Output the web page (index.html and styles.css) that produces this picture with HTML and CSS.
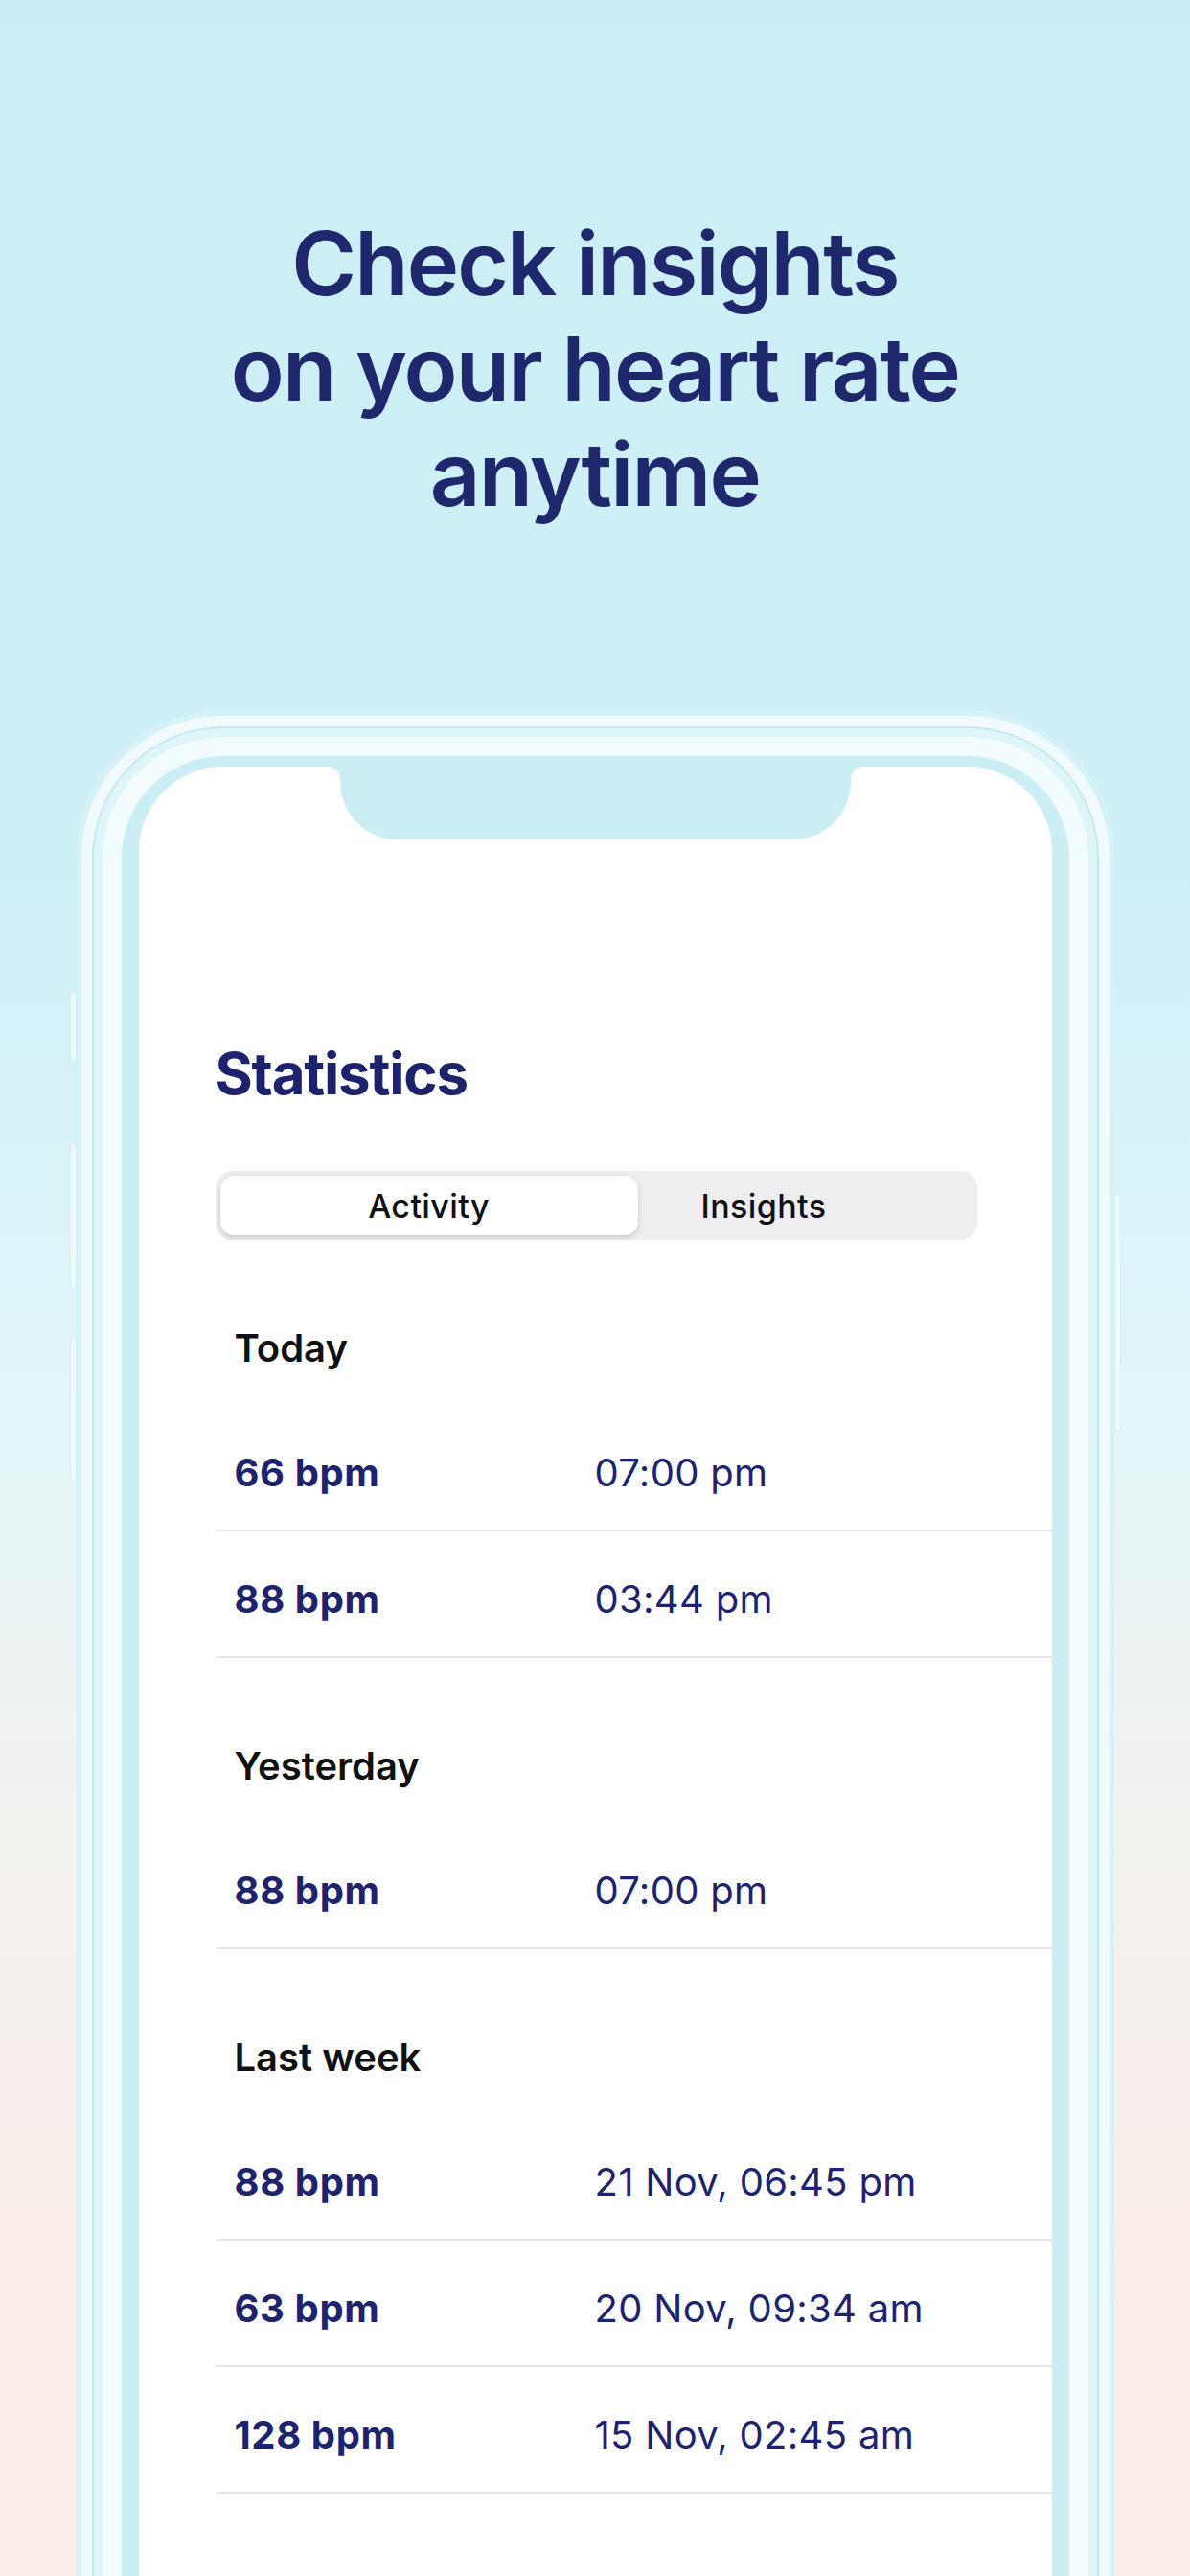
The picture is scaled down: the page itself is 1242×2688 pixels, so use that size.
FILE: index.html
```html
<!DOCTYPE html>
<html lang="en">
<head>
    <meta charset="UTF-8">
    <meta name="viewport" content="width=device-width, initial-scale=1.0">
    <title>Heart Rate Statistics</title>
    <link rel="stylesheet" href="styles.css">
</head>
<body>
    <div class="page">
        <h1 class="headline">Check insights<br>on your heart rate<br>anytime</h1>

        <div class="phone">
            <span class="side-btn left b1"></span>
            <span class="side-btn left b2"></span>
            <span class="side-btn left b3"></span>
            <span class="side-btn right b4"></span>

            <div class="screen">
                <div class="notch"></div>

                <h2 class="title">Statistics</h2>

                <div class="segmented">
                    <div class="segment active">Activity</div>
                    <div class="segment">Insights</div>
                </div>

                <div class="section">
                    <div class="section-head">Today</div>
                    <div class="row"><span class="bpm">66 bpm</span><span class="time">07:00 pm</span></div>
                    <div class="row"><span class="bpm">88 bpm</span><span class="time">03:44 pm</span></div>
                </div>

                <div class="section">
                    <div class="section-head">Yesterday</div>
                    <div class="row"><span class="bpm">88 bpm</span><span class="time">07:00 pm</span></div>
                </div>

                <div class="section">
                    <div class="section-head">Last week</div>
                    <div class="row"><span class="bpm">88 bpm</span><span class="time">21 Nov, 06:45 pm</span></div>
                    <div class="row"><span class="bpm">63 bpm</span><span class="time">20 Nov, 09:34 am</span></div>
                    <div class="row"><span class="bpm">128 bpm</span><span class="time">15 Nov, 02:45 am</span></div>
                </div>
            </div>
        </div>
    </div>
</body>
</html>
```

FILE: styles.css
```css
html, body {
    margin: 0;
    padding: 0;
}
body {
    font-family: Inter, "Noto Sans", sans-serif;
    height: 2688px;
    overflow: hidden;
    background: linear-gradient(180deg, #cbeef5 0, #cef0f6 900px, #e2f5f8 1450px, #f3f2ef 1900px, #faede9 2400px, #faede9 100%);
}
.page {
    padding-top: 220px;
}
.headline {
    margin: 0;
    text-align: center;
    font-size: 92px;
    line-height: 110px;
    font-weight: 600;
    letter-spacing: -1.8px;
    color: #1f276d;
}

/* device frame */
.phone {
    position: relative;
    width: 1083px;
    margin: 192px auto 0;
    padding: 58px 65px 0;
    box-sizing: border-box;
    border-radius: 153px 153px 0 0;
    background: #caeef4;
    box-shadow:
        inset 0 0 0 5px #d4f2f7,
        inset 0 0 0 16px #f1fbfd,
        inset 0 0 0 18px #c4eaf1,
        inset 0 0 0 27px #def5f9,
        inset 0 0 0 47px #f2fbfd;
}
.side-btn {
    position: absolute;
    width: 5px;
    border-radius: 2px;
    background: #effafc;
    box-shadow: 0 0 0 1px #d2eff5;
}
.side-btn.left { left: -6px; }
.side-btn.right { right: -6px; }
.b1 { top: 294px; height: 70px; }
.b2 { top: 452px; height: 150px; }
.b3 { top: 654px; height: 150px; }
.b4 { top: 505px; height: 245px; }

.screen {
    position: relative;
    background: #fff;
    border-radius: 88px 88px 0 0;
    padding: 284px 0 200px 80px;
    min-height: 1700px;
}
.notch {
    position: absolute;
    top: 0;
    left: 50%;
    width: 533px;
    height: 76px;
    margin-left: -266px;
    background: #caeef4;
    border-radius: 0 0 60px 60px;
}
.notch::before, .notch::after {
    content: "";
    position: absolute;
    top: 0;
    width: 12px;
    height: 12px;
}
.notch::before {
    right: 100%;
    background: radial-gradient(circle at 0 100%, transparent 11.5px, #caeef4 12px);
}
.notch::after {
    left: 100%;
    background: radial-gradient(circle at 100% 100%, transparent 11.5px, #caeef4 12px);
}

.title {
    margin: 0;
    font-size: 60px;
    line-height: 72px;
    font-weight: 700;
    letter-spacing: -1.2px;
    color: #1c236c;
}

.segmented {
    display: flex;
    width: 795px;
    height: 72px;
    margin-top: 66px;
    padding: 5px;
    box-sizing: border-box;
    background: #eeeef0;
    border-radius: 18px;
}
.segment {
    display: flex;
    align-items: center;
    justify-content: center;
    font-size: 34px;
    font-weight: 500;
    color: #111;
    letter-spacing: 0.4px;
}
.segment.active {
    width: 436px;
    background: #fff;
    border-radius: 14px;
    box-shadow: 0 3px 6px rgba(0, 0, 0, 0.13), 0 0 0 1px rgba(0, 0, 0, 0.03);
}
.segment:not(.active) {
    flex: 1;
    padding-right: 86px;
}

.section-head {
    padding: 89px 0 35px 20px;
    font-size: 40px;
    line-height: 48px;
    font-weight: 600;
    color: #111;
}
.row {
    display: flex;
    padding: 47px 0 35px 20px;
    font-size: 40px;
    line-height: 48px;
    color: #1d246d;
    letter-spacing: 0.3px;
    border-bottom: 2px solid #e6e6ea;
}
.bpm {
    width: 376px;
    font-weight: 700;
    letter-spacing: 0.6px;
}
.time {
    font-weight: 400;
}
```
